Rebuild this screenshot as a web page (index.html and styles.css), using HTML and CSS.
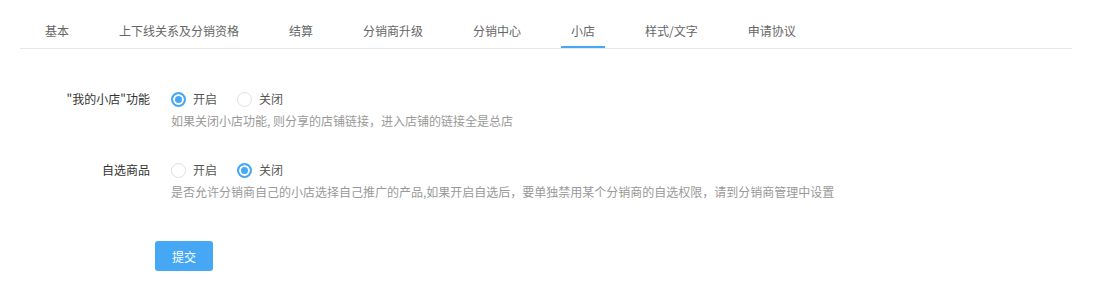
FILE: index.html
```html
<!DOCTYPE html>
<html lang="zh">
<head>
<meta charset="utf-8">
<link rel="stylesheet" href="styles.css">
</head>
<body>
<div class="tabs">
  <div class="tab">基本</div>
  <div class="tab">上下线关系及分销资格</div>
  <div class="tab">结算</div>
  <div class="tab">分销商升级</div>
  <div class="tab">分销中心</div>
  <div class="tab active">小店</div>
  <div class="tab">样式/文字</div>
  <div class="tab">申请协议</div>
</div>
<div class="form">
  <div class="row first">
    <div class="label">"我的小店"功能</div>
    <div class="field">
      <div class="radios">
        <span class="radio checked"><i></i>开启</span>
        <span class="radio"><i></i>关闭</span>
      </div>
      <div class="help">如果关闭小店功能, 则分享的店铺链接，进入店铺的链接全是总店</div>
    </div>
  </div>
  <div class="row second">
    <div class="label">自选商品</div>
    <div class="field">
      <div class="radios">
        <span class="radio"><i></i>开启</span>
        <span class="radio checked"><i></i>关闭</span>
      </div>
      <div class="help">是否允许分销商自己的小店选择自己推广的产品,如果开启自选后，要单独禁用某个分销商的自选权限，请到分销商管理中设置</div>
    </div>
  </div>
  <button class="submit">提交</button>
</div>
</body>
</html>
```

FILE: styles.css
```css
* { box-sizing: border-box; }
body {
  margin: 0;
  background: #fff;
  font-family: "Noto Sans CJK SC", "Noto Sans", sans-serif;
  font-size: 12px;
  color: #333;
}
.tabs {
  display: flex;
  margin: 0 28px 0 20px;
  height: 49px;
  border-bottom: 1px solid #e8e8e8;
  align-items: flex-end;
}
.tab {
  position: relative;
  margin: 0 15px;
  padding: 0 10px 9px;
  line-height: 17px;
  color: #666;
  white-space: nowrap;
}
.tab.active::after {
  content: "";
  position: absolute;
  left: 0;
  right: 0;
  bottom: 0;
  height: 2px;
  background: #46a8f5;
}
.form {
  padding-top: 40px;
}
.row {
  display: flex;
}
.row.second {
  margin-top: 29px;
}
.label {
  width: 150px;
  margin-right: 21px;
  text-align: right;
  line-height: 20px;
  color: #333;
}
.radios {
  display: flex;
  line-height: 20px;
}
.radio {
  display: flex;
  align-items: center;
  margin-right: 20px;
  color: #555;
}
.radio i {
  width: 15px;
  height: 15px;
  border: 1px solid #dcdfe6;
  border-radius: 50%;
  margin-right: 7px;
  background: #fff;
}
.radio.checked i {
  border: 2px solid #46a8f5;
  box-shadow: inset 0 0 0 2px #fff;
  background: #46a8f5;
}
.help {
  margin-top: 2px;
  line-height: 20px;
  color: #999;
}
.submit {
  display: block;
  margin: 39px 0 0 155px;
  width: 58px;
  height: 30px;
  border: none;
  border-radius: 3px;
  background: #46a8f5;
  color: #fff;
  font-family: inherit;
  font-size: 12px;
  padding: 0;
}
```
